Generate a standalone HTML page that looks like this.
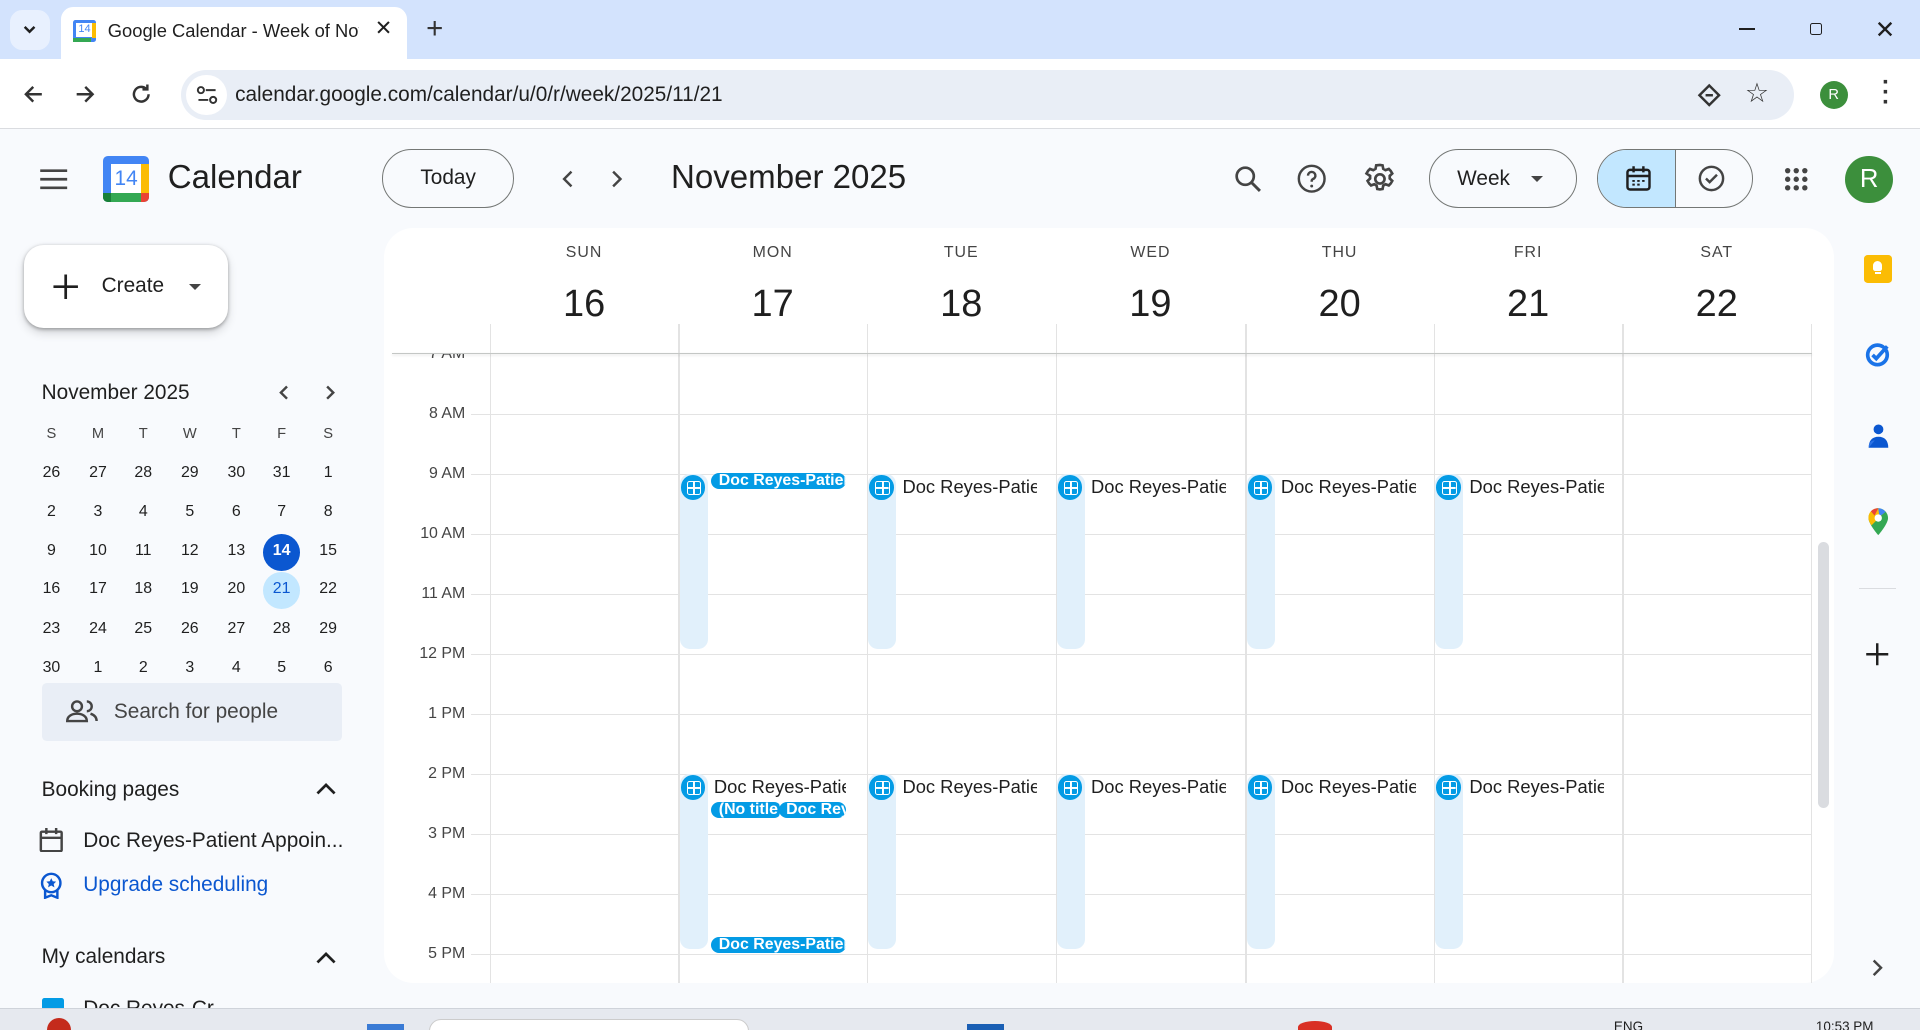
<!DOCTYPE html>
<html><head><meta charset="utf-8"><style>
*{box-sizing:border-box;margin:0;padding:0}
html,body{width:1920px;height:1030px;overflow:hidden;background:#f8fafd}
#w{width:1568px;height:841px;zoom:1.2244898;position:relative;font-family:"Liberation Sans",sans-serif;color:#1f1f1f;background:#f8fafd;overflow:hidden}
.a{position:absolute}
.t{position:absolute;white-space:nowrap}
.ic{position:absolute}
.hl{position:absolute;left:385px;right:88px;height:1px;background:#e3e3e3}
.vl{position:absolute;width:1px;background:#e3e3e3;top:265px;bottom:0}
.bar{position:absolute;width:23px;background:#e1f0fb;border-radius:8px}
.dot{position:absolute;width:20px;height:20px;border-radius:50%;background:#039be5}
.dot:after{content:"";position:absolute;left:5px;top:5px;width:10px;height:10px;border:1.6px solid #fff;border-radius:2px;background:linear-gradient(#fff,#fff) center/1.6px 100% no-repeat,linear-gradient(#fff,#fff) center/100% 1.6px no-repeat}
.ev{position:absolute;font-size:15px;color:#1f1f1f;width:110px;overflow:hidden;white-space:nowrap}
.chip{position:absolute;height:13px;background:#039be5;color:#fff;font-size:13px;font-weight:bold;line-height:13px;border-radius:7px;overflow:hidden;white-space:nowrap;padding-left:6px}
.tl{position:absolute;right:1188px;font-size:13px;color:#444;text-align:right;width:60px}
.mc{position:absolute;font-size:13px;width:26px;text-align:center;color:#1f1f1f}
</style></head><body><div id="w">
<div class="a" style="left:0;top:0;width:1568px;height:48px;background:#d3e3fd"></div>
<div class="a" style="left:8px;top:8px;width:33px;height:33px;border-radius:10px;background:#e8f0fe"></div>
<svg class="ic" style="left:17px;top:18px" width="14" height="12"><path d="M3 4l4 4 4-4" fill="none" stroke="#1f1f1f" stroke-width="2"/></svg>
<div class="a" style="left:50px;top:6px;width:282px;height:44px;background:#fff;border-radius:10px 10px 0 0"></div>
<div class="a" style="left:60px;top:16px;width:18px;height:18px;background:#4285f4;border-radius:2px"><div class="a" style="left:2px;top:3px;width:14px;height:11px;background:#fff;font-size:9px;color:#4285f4;text-align:center;line-height:11px">14</div><div class="a" style="left:0;bottom:0;width:14px;height:3px;background:#34a853"></div><div class="a" style="right:0;top:3px;width:3px;height:12px;background:#fbbc04"></div></div>
<div class="t" style="left:88px;top:16px;font-size:15px;width:205px;overflow:hidden">Google Calendar - Week of Nov</div>
<div class="t" style="left:306px;top:13px;font-size:17px">✕</div>
<div class="t" style="left:348px;top:10px;font-size:24px;color:#333">+</div>
<div class="a" style="left:1420px;top:23px;width:13px;height:1.5px;background:#1f1f1f"></div>
<div class="a" style="left:1478px;top:19px;width:10px;height:10px;border:1.5px solid #1f1f1f;border-radius:2px"></div>
<div class="t" style="left:1531px;top:12px;font-size:20px">✕</div>
<div class="a" style="left:0;top:48px;width:1568px;height:57px;background:#fff;border-bottom:1px solid #dadce0"></div>
<svg class="ic" style="left:17px;top:67px" width="20" height="20"><path d="M17 10H4M10 4l-6 6 6 6" fill="none" stroke="#333" stroke-width="2"/></svg>
<svg class="ic" style="left:60px;top:67px" width="20" height="20"><path d="M3 10h13M10 4l6 6-6 6" fill="none" stroke="#333" stroke-width="2"/></svg>
<svg class="ic" style="left:105px;top:67px" width="20" height="20"><path d="M16 10a6 6 0 1 1-2-4.5M15 2v4h-4" fill="none" stroke="#333" stroke-width="2"/></svg>
<div class="a" style="left:148px;top:57px;width:1317px;height:41px;background:#e9eef6;border-radius:21px"></div>
<div class="a" style="left:152px;top:61px;width:33px;height:33px;background:#fff;border-radius:50%"></div>
<svg class="ic" style="left:160px;top:69px" width="18" height="18"><circle cx="4" cy="5" r="2.5" fill="none" stroke="#333" stroke-width="1.6"/><path d="M8 5h8M2 13h8" stroke="#333" stroke-width="1.6"/><circle cx="14" cy="13" r="2.5" fill="none" stroke="#333" stroke-width="1.6"/></svg>
<div class="t" style="left:192px;top:68px;font-size:17px;color:#1f1f1f">calendar.google.com/calendar/u/0/r/week/2025/11/21</div>
<svg class="ic" style="left:1386px;top:68px" width="20" height="20"><path d="M10 2l8 8-8 8-8-8z" fill="none" stroke="#333" stroke-width="2"/><path d="M7 10h6" stroke="#333" stroke-width="2"/></svg>
<div class="t" style="left:1425px;top:64px;font-size:22px;color:#333">☆</div>
<div class="a" style="left:1486px;top:66px;width:23px;height:23px;border-radius:50%;background:#3c8f3c;color:#fff;font-size:12px;text-align:center;line-height:23px">R</div>
<div class="t" style="left:1537px;top:64px;font-size:20px;font-weight:bold;line-height:8px;color:#333;width:6px">·<br>·<br>·</div>
<svg class="ic" style="left:32px;top:136px" width="24" height="20"><path d="M1 3h22M1 10h22M1 17h22" stroke="#444" stroke-width="2.2"/></svg>
<div class="a" style="left:84px;top:127px;width:38px;height:38px;border-radius:4px;background:#4285f4;overflow:hidden">
<div class="a" style="left:7px;top:7px;width:24px;height:24px;background:#fff;color:#4285f4;font-size:17px;text-align:center;line-height:24px">14</div>
<div class="a" style="left:0;top:31px;width:31px;height:7px;background:#34a853"></div><div class="a" style="left:31px;top:7px;width:7px;height:24px;background:#fbbc04"></div><div class="a" style="left:31px;top:31px;width:7px;height:7px;background:#ea4335"></div><div class="a" style="left:0;top:31px;width:7px;height:7px;background:#188038"></div></div>
<div class="t" style="left:137px;top:130px;font-size:27px;color:#1f1f1f">Calendar</div>
<div class="a" style="left:312px;top:122px;width:108px;height:48px;border:1px solid #747775;border-radius:24px;font-size:17px;text-align:center;line-height:46px">Today</div>
<svg class="ic" style="left:456px;top:137px" width="16" height="18"><path d="M11 3L5 9l6 6" fill="none" stroke="#444" stroke-width="2"/></svg>
<svg class="ic" style="left:496px;top:137px" width="16" height="18"><path d="M5 3l6 6-6 6" fill="none" stroke="#444" stroke-width="2"/></svg>
<div class="t" style="left:548px;top:130px;font-size:27px">November 2025</div>
<svg class="ic" style="left:1007px;top:134px" width="24" height="24"><circle cx="10" cy="10" r="7" fill="none" stroke="#444" stroke-width="2.2"/><path d="M15 15l7 7" stroke="#444" stroke-width="2.4"/></svg>
<svg class="ic" style="left:1059px;top:134px" width="24" height="24"><circle cx="12" cy="12" r="10.5" fill="none" stroke="#444" stroke-width="2"/><path d="M9 9.5a3 3 0 1 1 4 2.8c-1 .5-1 1-1 2.2" fill="none" stroke="#444" stroke-width="2"/><circle cx="12" cy="18" r="1.2" fill="#444"/></svg>
<svg class="ic" style="left:1114px;top:133px" width="26" height="26" viewBox="0 0 24 24"><path d="M12 1.5l2 .3.5 2.6 1.7 1 2.5-.9 1.4 1.4 1.2 2-1.9 1.8v2l1.9 1.8-1.2 2-1.4 1.4-2.5-.9-1.7 1-.5 2.6-2 .3-2-.3-.5-2.6-1.7-1-2.5.9-1.4-1.4-1.2-2 1.9-1.8v-2L1.9 7.9l1.2-2 1.4-1.4 2.5.9 1.7-1 .5-2.6z" fill="none" stroke="#444" stroke-width="2"/><circle cx="12" cy="12" r="3.5" fill="none" stroke="#444" stroke-width="2"/></svg>
<div class="a" style="left:1167px;top:122px;width:121px;height:48px;border:1px solid #747775;border-radius:24px"></div>
<div class="t" style="left:1190px;top:136px;font-size:17px">Week</div>
<div class="a" style="left:1250px;top:144px;border:5px solid transparent;border-top-color:#444"></div>
<div class="a" style="left:1304px;top:122px;width:128px;height:48px;border:1px solid #747775;border-radius:24px;overflow:hidden"><div class="a" style="left:0;top:0;width:64px;height:48px;background:#c2e7ff;border-right:1px solid #747775"></div></div>
<svg class="ic" style="left:1327px;top:135px" width="22" height="22"><rect x="2" y="4" width="18" height="16" rx="2" fill="none" stroke="#1f1f1f" stroke-width="2"/><path d="M2 9h18M7 1v5M15 1v5" stroke="#1f1f1f" stroke-width="2"/><path d="M6 13h2M10 13h2M14 13h2M6 16h2M10 16h2" stroke="#1f1f1f" stroke-width="1.6"/></svg>
<svg class="ic" style="left:1387px;top:135px" width="22" height="22"><circle cx="11" cy="11" r="9.5" fill="none" stroke="#444" stroke-width="2"/><path d="M6.5 11l3 3 6-6" fill="none" stroke="#444" stroke-width="2"/></svg>
<svg class="ic" style="left:1457px;top:136px" width="20" height="20"><g fill="#444"><circle cx="3" cy="3" r="2.2"/><circle cx="10" cy="3" r="2.2"/><circle cx="17" cy="3" r="2.2"/><circle cx="3" cy="10" r="2.2"/><circle cx="10" cy="10" r="2.2"/><circle cx="17" cy="10" r="2.2"/><circle cx="3" cy="17" r="2.2"/><circle cx="10" cy="17" r="2.2"/><circle cx="17" cy="17" r="2.2"/></g></svg>
<div class="a" style="left:1507px;top:127px;width:39px;height:39px;border-radius:50%;background:#3c8f3c;color:#fff;font-size:21px;text-align:center;line-height:39px">R</div>
<div class="a" style="left:20px;top:200px;width:166px;height:68px;background:#fff;border-radius:16px;box-shadow:0 1px 3px rgba(0,0,0,.3),0 4px 8px rgba(0,0,0,.15)"></div>
<svg class="ic" style="left:42px;top:222px" width="24" height="24"><path d="M12 2v20M2 12h20" stroke="#1f1f1f" stroke-width="2.2"/></svg>
<div class="t" style="left:83px;top:224px;font-size:17px">Create</div>
<div class="a" style="left:154px;top:232px;border:5px solid transparent;border-top-color:#444"></div>
<div class="t" style="left:34px;top:311px;font-size:17px">November 2025</div>
<svg class="ic" style="left:225px;top:314px" width="14" height="14"><path d="M9 2L4 7l5 5" fill="none" stroke="#444" stroke-width="2"/></svg>
<svg class="ic" style="left:262px;top:314px" width="14" height="14"><path d="M5 2l5 5-5 5" fill="none" stroke="#444" stroke-width="2"/></svg>
<div class="a" style="left:215px;top:436px;width:30px;height:30px;border-radius:50%;background:#0b57d0"></div>
<div class="a" style="left:215px;top:467px;width:30px;height:30px;border-radius:50%;background:#c2e7ff"></div>
<div id="mini"></div>
<div class="a" style="left:34px;top:558px;width:245px;height:47px;background:#e9eef6;border-radius:4px"></div>
<svg class="ic" style="left:54px;top:571px" width="26" height="20"><circle cx="9" cy="6" r="4" fill="none" stroke="#444" stroke-width="2"/><path d="M1 18c0-4 4-6 8-6s8 2 8 6z" fill="none" stroke="#444" stroke-width="2"/><path d="M17 2a4 4 0 0 1 0 8M20 12c3 1 5 3 5 6" fill="none" stroke="#444" stroke-width="2"/></svg>
<div class="t" style="left:93px;top:572px;font-size:17px;color:#444">Search for people</div>
<div class="t" style="left:34px;top:635px;font-size:17px">Booking pages</div>
<svg class="ic" style="left:257px;top:637px" width="18" height="14"><path d="M2 11l7-7 7 7" fill="none" stroke="#1f1f1f" stroke-width="2.2"/></svg>
<svg class="ic" style="left:32px;top:676px" width="20" height="20"><rect x="1.5" y="3" width="17" height="16" rx="1" fill="none" stroke="#444" stroke-width="2"/><path d="M1.5 8h17M6 0v5M14 0v5" stroke="#444" stroke-width="2"/></svg>
<div class="t" style="left:68px;top:677px;font-size:17px">Doc Reyes-Patient Appoin...</div>
<svg class="ic" style="left:32px;top:712px" width="20" height="22"><circle cx="10" cy="9" r="7.5" fill="none" stroke="#0b57d0" stroke-width="2"/><path d="M10 5l1.2 2.6 2.8.3-2 1.9.6 2.8L10 11l-2.6 1.6.6-2.8-2-1.9 2.8-.3z" fill="#0b57d0"/><path d="M5 15v6l5-2 5 2v-6" fill="none" stroke="#0b57d0" stroke-width="2"/></svg>
<div class="t" style="left:68px;top:713px;font-size:17px;color:#0b57d0">Upgrade scheduling</div>
<div class="t" style="left:34px;top:772px;font-size:17px">My calendars</div>
<svg class="ic" style="left:257px;top:775px" width="18" height="14"><path d="M2 11l7-7 7 7" fill="none" stroke="#1f1f1f" stroke-width="2.2"/></svg>
<div class="a" style="left:34px;top:815px;width:18px;height:10px;background:#039be5;border-radius:2px"></div>
<div class="t" style="left:68px;top:814px;font-size:17px">Doc Reyes-Cr</div>
<div class="a" style="left:314px;top:186px;width:1184px;height:617px;background:#fff;border-radius:24px;overflow:hidden" id="main"></div>
<div id="grid"></div>
<div class="a" style="left:1485px;top:443px;width:9px;height:217px;background:#dadce0;border-radius:5px"></div>
<div class="a" style="left:1522px;top:208px;width:23px;height:23px;background:#fbbc04;border-radius:3px"></div>
<div class="a" style="left:1530px;top:213px;width:7px;height:8px;background:#fff;border-radius:4px 4px 2px 2px"></div>
<div class="a" style="left:1531px;top:222px;width:5px;height:2px;background:#fff"></div>
<svg class="ic" style="left:1522px;top:277px" width="24" height="24"><circle cx="11" cy="13" r="8" fill="none" stroke="#1a73e8" stroke-width="3"/><path d="M7 13l3 3 9-10" fill="none" stroke="#1a73e8" stroke-width="3"/></svg>
<svg class="ic" style="left:1523px;top:345px" width="22" height="22"><circle cx="11" cy="6" r="4" fill="#0b57d0"/><path d="M3 21c0-6 3-9 8-9s8 3 8 9z" fill="#0b57d0"/><path d="M3 21c0-4 2-6 5-6" fill="#4285f4" opacity=".6"/></svg>
<svg class="ic" style="left:1524px;top:414px" width="20" height="24" viewBox="0 0 20 24"><path d="M10 1a8 8 0 0 0-8 8c0 5 8 14 8 14s8-9 8-14a8 8 0 0 0-8-8z" fill="#34a853"/><path d="M4 3.5A8 8 0 0 0 2 9c0 2 1 4 2.5 6L15 4.5A8 8 0 0 0 10 1 8 8 0 0 0 4 3.5z" fill="#fbbc04"/><path d="M4 3.5A8 8 0 0 1 10 1l-3 6z" fill="#ea4335"/><path d="M10 1a8 8 0 0 1 6 3l-5 4z" fill="#4285f4"/><circle cx="10" cy="9" r="3" fill="#fff"/></svg>
<div class="a" style="left:1518px;top:480px;width:30px;height:1px;background:#dadce0"></div>
<svg class="ic" style="left:1523px;top:524px" width="20" height="20"><path d="M10 1v18M1 10h18" stroke="#1f1f1f" stroke-width="2"/></svg>
<svg class="ic" style="left:1527px;top:782px" width="12" height="16"><path d="M3 2l6 6-6 6" fill="none" stroke="#444" stroke-width="2"/></svg>
<div class="a" style="left:0;top:823px;width:1568px;height:18px;background:#e6e9ef;border-top:1px solid #cfd3da"></div>
<div class="a" style="left:38px;top:831px;width:20px;height:20px;border-radius:50%;background:#c42b1c"></div>
<div class="a" style="left:350px;top:832px;width:262px;height:20px;border-radius:10px;background:#fff;border:1px solid #ccc"></div>
<div class="a" style="left:300px;top:836px;width:30px;height:8px;background:#3a7bd5"></div>
<div class="a" style="left:790px;top:836px;width:30px;height:8px;background:#1a5fb4"></div>
<div class="a" style="left:1060px;top:834px;width:28px;height:10px;border-radius:50% 50% 0 0;background:#d93025"></div>
<div class="t" style="left:1318px;top:832px;font-size:11px">ENG</div>
<div class="t" style="left:1483px;top:832px;font-size:11px">10:53 PM</div>
<script>
var g='';
var days=[['SUN',16],['MON',17],['TUE',18],['WED',19],['THU',20],['FRI',21],['SAT',22]];
var cx=[400,554,708,862,1017,1171,1325,1479];
for(var i=0;i<7;i++){var c=(cx[i]+cx[i+1])/2;
g+='<div class="t" style="left:'+(c-40)+'px;width:80px;text-align:center;top:199px;font-size:13px;letter-spacing:.8px;color:#444">'+days[i][0]+'</div>';
g+='<div class="t" style="left:'+(c-40)+'px;width:80px;text-align:center;top:231px;font-size:31px;color:#1f1f1f">'+days[i][1]+'</div>';}
for(var i=0;i<8;i++){g+='<div class="vl" style="left:'+cx[i]+'px;bottom:38px"></div>';}
g+='<div class="t" style="left:323px;top:265px;font-size:12.5px;color:#444">GMT+00</div>';
var hrs=['7 AM','8 AM','9 AM','10 AM','11 AM','12 PM','1 PM','2 PM','3 PM','4 PM','5 PM'];
for(var i=0;i<hrs.length;i++){var y=289+i*49;
if(i>0)g+='<div class="hl" style="top:'+y+'px"></div>';
g+='<div class="tl" style="left:320px;top:'+(y-7)+'px">'+hrs[i]+'</div>';}
g+='<div class="a" style="left:320px;top:265px;width:1160px;height:23px;background:#fff"></div>';
g+='<div class="a" style="left:320px;top:288px;width:1160px;height:1px;background:#c4c7c5;box-shadow:0 1px 2px rgba(0,0,0,.15)"></div>';
for(var i=0;i<8;i++){g+='<div class="vl" style="left:'+cx[i]+'px;top:265px;height:23px;bottom:auto"></div>';}
for(var d=1;d<=5;d++){var x=cx[d];
[[387,143],[632,143]].forEach(function(b,k){
g+='<div class="bar" style="left:'+(x+1)+'px;top:'+b[0]+'px;height:'+b[1]+'px"></div>';
g+='<div class="dot" style="left:'+(x+2)+'px;top:'+(b[0]+1)+'px"></div>';
if(!(d==1&&k==0))g+='<div class="ev" style="left:'+(x+29)+'px;top:'+(b[0]+2)+'px;width:'+(d==1?108:110)+'px">Doc Reyes-Patient Appointment</div>';});}
g+='<div class="chip" style="left:581px;top:386px;width:110px">Doc Reyes-Patient</div>';
g+='<div class="chip" style="left:581px;top:655px;width:58px">(No title)</div>';
g+='<div class="chip" style="left:636px;top:655px;width:55px">Doc Reyes</div>';
g+='<div class="chip" style="left:581px;top:765px;width:110px">Doc Reyes-Patient</div>';
g+='<div class="a" style="left:314px;top:803px;width:1184px;height:20px;background:#f8fafd"></div>';
document.getElementById('grid').innerHTML=g;
var m='',mx=[42,80,117,155,193,230,268],hd='SMTWTFS';
for(var i=0;i<7;i++)m+='<div class="mc" style="left:'+(mx[i]-13)+'px;top:348px;font-size:12px;color:#444">'+hd[i]+'</div>';
var nums=[26,27,28,29,30,31,1,2,3,4,5,6,7,8,9,10,11,12,13,14,15,16,17,18,19,20,21,22,23,24,25,26,27,28,29,30,1,2,3,4,5,6];
var ry=[386,418,450,481,513,545];
for(var r=0;r<6;r++)for(var i=0;i<7;i++){var n=nums[r*7+i];var col='#1f1f1f';var s='';if(r==2&&i==5){col='#fff';s='font-weight:bold;';}if(r==3&&i==5){col='#0b57d0';}
m+='<div class="mc" style="left:'+(mx[i]-13)+'px;top:'+(ry[r]-7)+'px;color:'+col+';'+s+'">'+n+'</div>';}
document.getElementById('mini').innerHTML=m;
</script>
</div></body></html>
